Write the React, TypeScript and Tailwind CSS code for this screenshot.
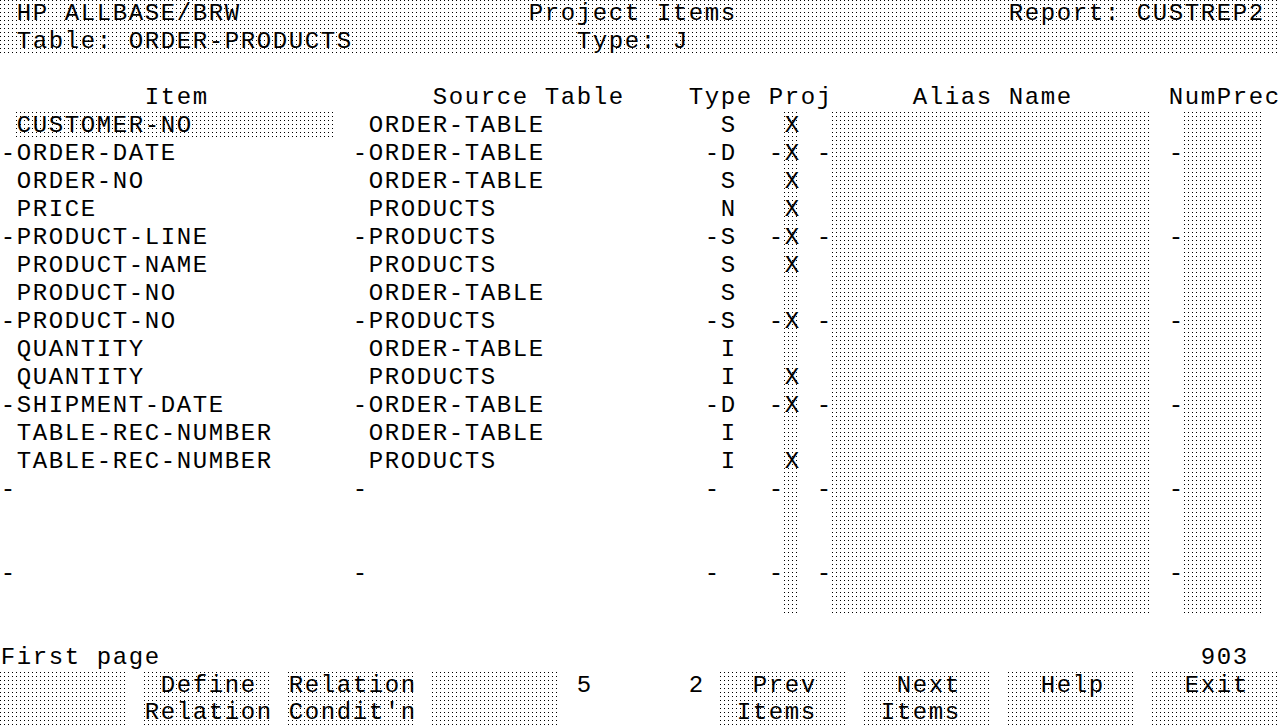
import clsx from "clsx";

const COLS = 80;

// 1px black dots on a 4px grid, the terminal's "half-bright" field fill
const DOT =
  "bg-[image:conic-gradient(from_270deg_at_1px_1px,#000_90deg,transparent_0deg)] bg-[length:4px_4px] bg-fixed";

type Seg = [number, string];
type Span = [number, number];

type Line = { text: string; mask: boolean[] };

function line(segs: Seg[], spans: Span[] = []): Line {
  const chars = Array(COLS).fill(" ");
  segs.forEach(([col, s]) => {
    for (let i = 0; i < s.length && col + i < COLS; i++) chars[col + i] = s[i];
  });
  const mask = Array(COLS).fill(false);
  spans.forEach(([col, len]) => {
    for (let i = col; i < col + len && i < COLS; i++) mask[i] = true;
  });
  return { text: chars.join(""), mask };
}

type Item = { name: string; src: string; type: string; proj: boolean; dash: boolean };

const items: Item[] = [
  { name: "CUSTOMER-NO", src: "ORDER-TABLE", type: "S", proj: true, dash: false },
  { name: "ORDER-DATE", src: "ORDER-TABLE", type: "D", proj: true, dash: true },
  { name: "ORDER-NO", src: "ORDER-TABLE", type: "S", proj: true, dash: false },
  { name: "PRICE", src: "PRODUCTS", type: "N", proj: true, dash: false },
  { name: "PRODUCT-LINE", src: "PRODUCTS", type: "S", proj: true, dash: true },
  { name: "PRODUCT-NAME", src: "PRODUCTS", type: "S", proj: true, dash: false },
  { name: "PRODUCT-NO", src: "ORDER-TABLE", type: "S", proj: false, dash: false },
  { name: "PRODUCT-NO", src: "PRODUCTS", type: "S", proj: true, dash: true },
  { name: "QUANTITY", src: "ORDER-TABLE", type: "I", proj: false, dash: false },
  { name: "QUANTITY", src: "PRODUCTS", type: "I", proj: true, dash: false },
  { name: "SHIPMENT-DATE", src: "ORDER-TABLE", type: "D", proj: true, dash: true },
  { name: "TABLE-REC-NUMBER", src: "ORDER-TABLE", type: "I", proj: false, dash: false },
  { name: "TABLE-REC-NUMBER", src: "PRODUCTS", type: "I", proj: true, dash: false },
];

// enterable columns: Proj, Alias Name, NumPrec
const fieldSpans: Span[] = [
  [49, 1],
  [52, 20],
  [74, 5],
];

const dashes: Seg[] = [
  [0, "-"],
  [22, "-"],
  [44, "-"],
  [48, "-"],
  [51, "-"],
  [73, "-"],
];

const keySpans: Span[] = [
  [0, 8],
  [9, 8],
  [18, 8],
  [27, 8],
  [45, 8],
  [54, 8],
  [63, 8],
  [72, 8],
];

const screen: Line[] = [
  line(
    [
      [1, "HP ALLBASE/BRW"],
      [33, "Project Items"],
      [63, "Report: CUSTREP2"],
    ],
    [[0, 80]]
  ),
  line(
    [
      [1, "Table: ORDER-PRODUCTS"],
      [36, "Type: J"],
    ],
    [[0, 80]]
  ),
  line([]),
  line([
    [9, "Item"],
    [27, "Source Table"],
    [43, "Type"],
    [48, "Proj"],
    [57, "Alias Name"],
    [73, "NumPrec"],
  ]),
  ...items.map((it, i) => {
    const segs: Seg[] = [
      [1, it.name],
      [23, it.src],
      [45, it.type],
    ];
    if (it.proj) segs.push([49, "X"]);
    if (it.dash) segs.push(...dashes);
    return line(segs, i === 0 ? [[1, 20], ...fieldSpans] : fieldSpans);
  }),
  line(dashes, fieldSpans),
  line([], fieldSpans),
  line([], fieldSpans),
  line(dashes, fieldSpans),
  line([], fieldSpans),
  line([]),
  line([
    [0, "First page"],
    [75, "903"],
  ]),
  line(
    [
      [10, "Define"],
      [18, "Relation"],
      [36, "5"],
      [43, "2"],
      [47, "Prev"],
      [56, "Next"],
      [65, "Help"],
      [74, "Exit"],
    ],
    keySpans
  ),
  line(
    [
      [9, "Relation"],
      [18, "Condit'n"],
      [46, "Items"],
      [55, "Items"],
    ],
    keySpans
  ),
];

export default function App() {
  const last = screen.length - 1;
  return (
    <div className="w-[1280px] h-[725px] overflow-hidden bg-white text-black font-['Liberation_Mono','DejaVu_Sans_Mono',monospace] text-[24px] leading-[28px]">
      {screen.map((row, r) => (
        // bottom row is cut by the window edge, as on the real screen
        <div key={r} className={clsx("flex", r === last ? "h-[25px] leading-[25px]" : "h-7")}>
          {row.text.split("").map((ch, c) => (
            <span
              key={c}
              className={clsx("w-4 shrink-0 text-center whitespace-pre", r === last ? "h-[25px]" : "h-7", row.mask[c] && DOT)}
            >
              {ch}
            </span>
          ))}
        </div>
      ))}
    </div>
  );
}
